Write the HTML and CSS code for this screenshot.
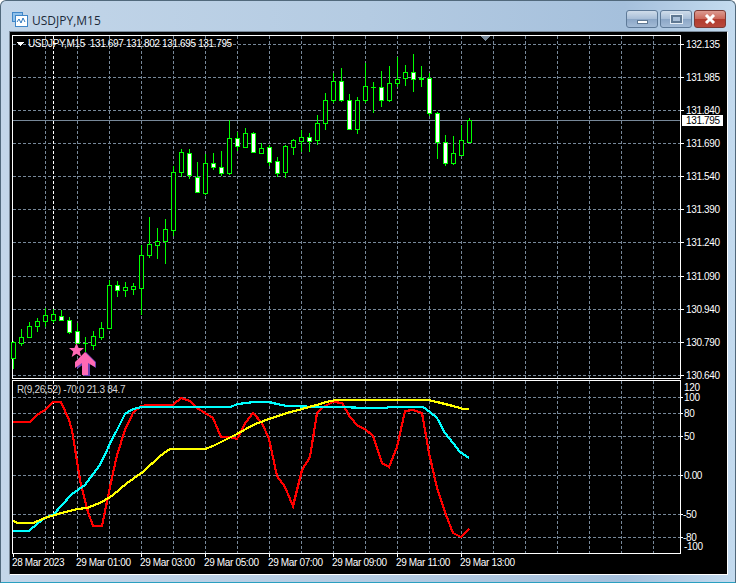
FILE: index.html
```html
<!DOCTYPE html>
<html lang="en">
  <head>
    <meta charset="UTF-8" />
    <title>USDJPY,M15</title>
    <link rel="stylesheet" href="styles.css">
  </head>
  <body>
    <div class="window">
      <div class="titlebar">
        <svg class="app-icon" width="16" height="16" viewBox="0 0 16 16">
          <rect x="0.5" y="0.5" width="10" height="9" fill="#8fc0ea" stroke="#3f86c8" />
          <rect x="3.5" y="3.5" width="12" height="11" fill="#fff" stroke="#3f86c8" />
          <path d="M5 10l2-3 2 4 2-5 2 4" fill="none" stroke="#2f78be" />
        </svg>
        <span class="title">USDJPY,M15</span>
        <div class="controls">
          <div class="btn">
            <span class="glyph-min"></span>
          </div>
          <div class="btn">
            <span class="glyph-max"></span>
          </div>
          <div class="btn btn-close">
            <svg width="14" height="10" viewBox="0 0 14 10">
              <path d="M3 1l8 8M11 1l-8 8" stroke="#fff" stroke-width="3" />
            </svg>
          </div>
        </div>
      </div>

      <div class="chart-frame">
        <svg class="chart" width="717" height="542" viewBox="10 32 717 542">
          <!-- plot frames -->
          <path class="frame" d="M12.5 35.5H680.5V378.5H12.5zM12.5 380.5H680.5V553.5H12.5z" />

          <!-- grid -->
          <path class="grid" d="M13 44.5H680M13 77.5H680M13 110.5H680M13 143.5H680M13 176.5H680M13 209.5H680M13 242.5H680M13 276.5H680M13 309.5H680M13 342.5H680M13 375.5H680M13 397.5H680M13 413.5H680M13 436.5H680M13 475.5H680M13 514.5H680M13 537.5H680" />
          <path class="grid" d="M45.5 36V378M77.5 36V378M109.5 36V378M141.5 36V378M173.5 36V378M205.5 36V378M237.5 36V378M269.5 36V378M301.5 36V378M333.5 36V378M365.5 36V378M397.5 36V378M429.5 36V378M461.5 36V378M493.5 36V378M525.5 36V378M557.5 36V378M589.5 36V378M621.5 36V378M653.5 36V378" />
          <path class="grid" d="M45.5 381V553M77.5 381V553M109.5 381V553M141.5 381V553M173.5 381V553M205.5 381V553M237.5 381V553M269.5 381V553M301.5 381V553M333.5 381V553M365.5 381V553M397.5 381V553M429.5 381V553M461.5 381V553M493.5 381V553M525.5 381V553M557.5 381V553M589.5 381V553M621.5 381V553M653.5 381V553" />
          <path class="separator" d="M53.5 36V378M53.5 381V553" />
          <path class="price-line" d="M13 120.5H680" />

          <!-- axis ticks -->
          <path class="frame" d="M681 44.5h3M681 77.5h3M681 110.5h3M681 143.5h3M681 176.5h3M681 209.5h3M681 242.5h3M681 276.5h3M681 309.5h3M681 342.5h3M681 375.5h3M681 397.5h2M681 413.5h2M681 436.5h2M681 475.5h2M681 514.5h2M681 537.5h2M13.5 554v3M77.5 554v3M141.5 554v3M205.5 554v3M269.5 554v3M333.5 554v3M397.5 554v3M461.5 554v3" />

          <!-- candles -->
          <path class="wick" d="M13.5 341V369M21.5 329V346M29.5 322V337M37.5 318V332M45.5 308V327M53.5 309V323M61.5 310V321M69.5 317V334M77.5 323V343M85.5 337V352M93.5 331V350M101.5 322V340M109.5 280V328M117.5 281V297M125.5 282V297M133.5 283V295M141.5 245V315M149.5 217V258M157.5 228V259M165.5 219V264M173.5 166V236M181.5 149V177M189.5 149V179M197.5 162V193M205.5 154V195M213.5 153V170M221.5 151V176M229.5 120V175M237.5 132V151M245.5 128V148M253.5 132V153M261.5 143V154M269.5 145V166M277.5 157V177M285.5 145V178M293.5 139V155M301.5 130V152M309.5 133V152M317.5 115V145M325.5 93V130M333.5 73V103M341.5 68V102M349.5 94V130M357.5 97V134M365.5 63V103M373.5 82V113M381.5 71V107M389.5 66V102M397.5 57V87M405.5 65V86M413.5 54V92M421.5 66V87M429.5 73V116M437.5 112V159M445.5 135V166M453.5 136V165M461.5 125V155M469.5 118V142M83 343.5h5M371 87.5h5" />
          <path class="candle-up" d="M11.5 342.5h4v16h-4zM19.5 337.5h4v6h-4zM27.5 326.5h4v11h-4zM35.5 321.5h4v5h-4zM43.5 315.5h4v6h-4zM51.5 314.5h4v6h-4zM91.5 336.5h4v9h-4zM99.5 328.5h4v9h-4zM107.5 285.5h4v43h-4zM123.5 287.5h4v3h-4zM131.5 286.5h4v3h-4zM139.5 255.5h4v33h-4zM147.5 244.5h4v11h-4zM155.5 241.5h4v4h-4zM163.5 229.5h4v12h-4zM171.5 172.5h4v58h-4zM179.5 152.5h4v20h-4zM203.5 163.5h4v30h-4zM227.5 138.5h4v35h-4zM243.5 133.5h4v14h-4zM259.5 148.5h4v5h-4zM283.5 146.5h4v26h-4zM291.5 140.5h4v7h-4zM299.5 137.5h4v4h-4zM315.5 123.5h4v17h-4zM323.5 100.5h4v23h-4zM331.5 81.5h4v19h-4zM355.5 100.5h4v29h-4zM363.5 86.5h4v14h-4zM387.5 83.5h4v17h-4zM395.5 79.5h4v4h-4zM403.5 72.5h4v6h-4zM419.5 78.5h4v1h-4zM451.5 153.5h4v10h-4zM459.5 140.5h4v15h-4zM467.5 120.5h4v22h-4z" />
          <path class="candle-down" d="M59.5 316.5h4v4h-4zM67.5 320.5h4v12h-4zM75.5 331.5h4v12h-4zM115.5 285.5h4v5h-4zM187.5 153.5h4v22h-4zM195.5 177.5h4v15h-4zM211.5 163.5h4v4h-4zM219.5 167.5h4v6h-4zM235.5 138.5h4v8h-4zM251.5 133.5h4v19h-4zM267.5 147.5h4v15h-4zM275.5 161.5h4v12h-4zM307.5 137.5h4v4h-4zM339.5 81.5h4v19h-4zM347.5 100.5h4v29h-4zM379.5 87.5h4v13h-4zM411.5 72.5h4v7h-4zM427.5 78.5h4v35h-4zM435.5 113.5h4v29h-4zM443.5 142.5h4v21h-4z" />

          <!-- signal marks -->
          <polygon class="mark-shadow" points="86,352 96,362 96,368 90,364 90,376 84,376 84,364 77,369 77,362" />
          <polygon class="mark" points="85,352 95,362 95,367 88,363 88,375 82,375 82,363 75,368 75,362" />
          <polygon class="mark" points="76.5,343 78.6,348 84,348 79.8,351.4 81.3,357 76.5,353.8 71.7,357 73.2,351.4 69,348 74.4,348" />

          <!-- indicator lines -->
          <polyline class="line line-red" points="13,422 30,422 37,415 45,410 53,402 61,402 69,420 72,430 80,480 88,512 93,526 102,526 110,487 117,455 125,430 133,413 141,406 150,405 173,405 181,398 190,401 197,408 205,413 213,418 221,437 230,437 237,439 246,422 253,413 262,423 269,439 277,476 285,487 293,506 302,470 310,457 317,413 322,408 327,405 333,402 342,403 350,417 358,426 365,429 373,436 382,463 389,467 397,447 405,411 413,410 422,413 429,453 437,488 446,515 453,533 461,537 469,529" />
          <polyline class="line line-cyan" points="13,531 29,531 37,524 45,518 53,515 62,505 72,494 85,485 100,465 108,448 117,430 125,414 133,409 142,407 230,407 238,404 254,402 269,402 277,404 287,406 320,407 342,407 365,408 385,408 390,407 423,407 430,412 437,418 445,433 453,443 460,452 469,458" />
          <polyline class="line line-yellow" points="13,521 18,523 33,523 45,518 58,514 77,509 87,508 102,502 113,495 127,483 143,472 160,456 170,449 205,449 213,446 237,434 253,425 269,419 287,413 302,409 320,404 330,401 337,400 428,400 437,402 453,406 463,409 469,409" />

          <!-- texts -->
          <polygon class="legend-mark" points="16,42 24,42 20,46" />
          <polygon class="shift-mark" points="480,36 490,36 485,41" />
          <text class="label" x="28" y="47">USDJPY,M15  131.697 131.802 131.695 131.795</text>
          <text class="label label-sub" x="17" y="393">R(9,26,52) -70.0 21.3 84.7</text>

          <text class="label" x="686" y="48">132.135</text>
          <text class="label" x="686" y="81">131.985</text>
          <text class="label" x="686" y="114">131.840</text>
          <rect class="price-box" x="682" y="115" width="41" height="11" />
          <text class="label label-dark" x="686" y="124">131.795</text>
          <text class="label" x="686" y="147">131.690</text>
          <text class="label" x="686" y="180">131.540</text>
          <text class="label" x="686" y="213">131.390</text>
          <text class="label" x="686" y="246">131.240</text>
          <text class="label" x="686" y="280">131.090</text>
          <text class="label" x="686" y="313">130.940</text>
          <text class="label" x="686" y="346">130.790</text>
          <text class="label" x="686" y="379">130.640</text>

          <text class="label" x="684" y="391">120</text>
          <text class="label" x="684" y="401">100</text>
          <text class="label" x="684" y="417">80</text>
          <text class="label" x="684" y="440">50</text>
          <text class="label" x="684" y="479">0.00</text>
          <text class="label" x="683" y="518">-50</text>
          <text class="label" x="683" y="541">-80</text>
          <text class="label" x="684" y="550">-100</text>

          <text class="label" x="12" y="566">28 Mar 2023</text>
          <text class="label" x="76" y="566">29 Mar 01:00</text>
          <text class="label" x="140" y="566">29 Mar 03:00</text>
          <text class="label" x="204" y="566">29 Mar 05:00</text>
          <text class="label" x="268" y="566">29 Mar 07:00</text>
          <text class="label" x="332" y="566">29 Mar 09:00</text>
          <text class="label" x="396" y="566">29 Mar 11:00</text>
          <text class="label" x="460" y="566">29 Mar 13:00</text>
        </svg>
      </div>
    </div>
  </body>
</html>
```

FILE: styles.css
```css
body {
  margin: 0;
  background-color: #fff;
  font-family: "Open Sans", Arial, sans-serif;
}
.window {
  width: 736px;
  height: 583px;
  box-sizing: border-box;
  border: 1px solid #51697c;
  border-bottom-color: #2a9fc0;
  border-radius: 6px 6px 0 0;
  padding: 0 7px 7px 8px;
  background: linear-gradient(to right, #c3d6e9 0%, #b4cbe2 50%, #a5c0dc 85%, #c4dbef 100%);
  display: flex;
  flex-direction: column;
}
.titlebar {
  height: 30px;
  display: flex;
  align-items: center;
  padding-left: 3px;
  flex-shrink: 0;
}
.app-icon {
  margin-top: 8px;
}
.title {
  margin-left: 4px;
  margin-top: 9px;
  font-size: 12px;
  color: #1c2a3a;
}
.controls {
  align-self: flex-start;
  margin-left: auto;
  margin-right: 2px;
  margin-top: 9px;
  display: flex;
  gap: 2px;
}
.btn {
  width: 32px;
  height: 18px;
  box-sizing: border-box;
  border: 1px solid #5e7a98;
  border-radius: 3px;
  background: linear-gradient(to bottom, #cfdcea 0%, #a9bfd8 48%, #8ba6c6 52%, #a3bbd6 100%);
  display: flex;
  align-items: center;
  justify-content: center;
}
.btn-close {
  border-color: #7d3a34;
  background: linear-gradient(to bottom, #dc9a90 0%, #cc6a5c 48%, #b23c2e 52%, #b8483c 100%);
}
.glyph-min {
  width: 11px;
  height: 4px;
  margin-top: 5px;
  box-sizing: border-box;
  background-color: #fff;
  border: 1px solid #5f7892;
}
.glyph-max {
  width: 11px;
  height: 8px;
  box-sizing: border-box;
  border: 2px solid #5f7892;
  outline: 1px solid #e4edf5;
  background-color: #a9bfd8;
}
.chart-frame {
  width: 717px;
  height: 542px;
  border: 1px solid #fff;
  border-top-color: #7b8a99;
  border-left-color: #7b8a99;
  background-color: #000;
  overflow: hidden;
}
.chart {
  display: block;
  shape-rendering: crispEdges;
}
.frame {
  fill: none;
  stroke: #fff;
}
.grid {
  fill: none;
  stroke: #778899;
  stroke-dasharray: 3 2;
}
.separator {
  fill: none;
  stroke: #fff;
  stroke-dasharray: 3 2;
}
.price-line {
  stroke: #778899;
}
.wick {
  fill: none;
  stroke: #00ff00;
}
.candle-up {
  fill: #000;
  stroke: #00ff00;
}
.candle-down {
  fill: #fff;
  stroke: #00ff00;
}
.mark {
  fill: #ff69b4;
  shape-rendering: geometricPrecision;
}
.mark-shadow {
  fill: #6a3fb0;
  shape-rendering: geometricPrecision;
}
.line {
  fill: none;
  stroke-width: 2.2;
}
.line-red {
  stroke: #ff0000;
}
.line-cyan {
  stroke: #00ffff;
}
.line-yellow {
  stroke: #ffff00;
}
.legend-mark {
  fill: #fff;
}
.shift-mark {
  fill: #778899;
}
.label {
  font-family: "Liberation Sans", Arial, sans-serif;
  font-size: 10px;
  letter-spacing: -0.35px;
  fill: #fff;
  white-space: pre;
  shape-rendering: auto;
}
.label-sub {
  fill: #d8d8d8;
}
.label-dark {
  fill: #000;
}
.price-box {
  fill: #fff;
}
```
